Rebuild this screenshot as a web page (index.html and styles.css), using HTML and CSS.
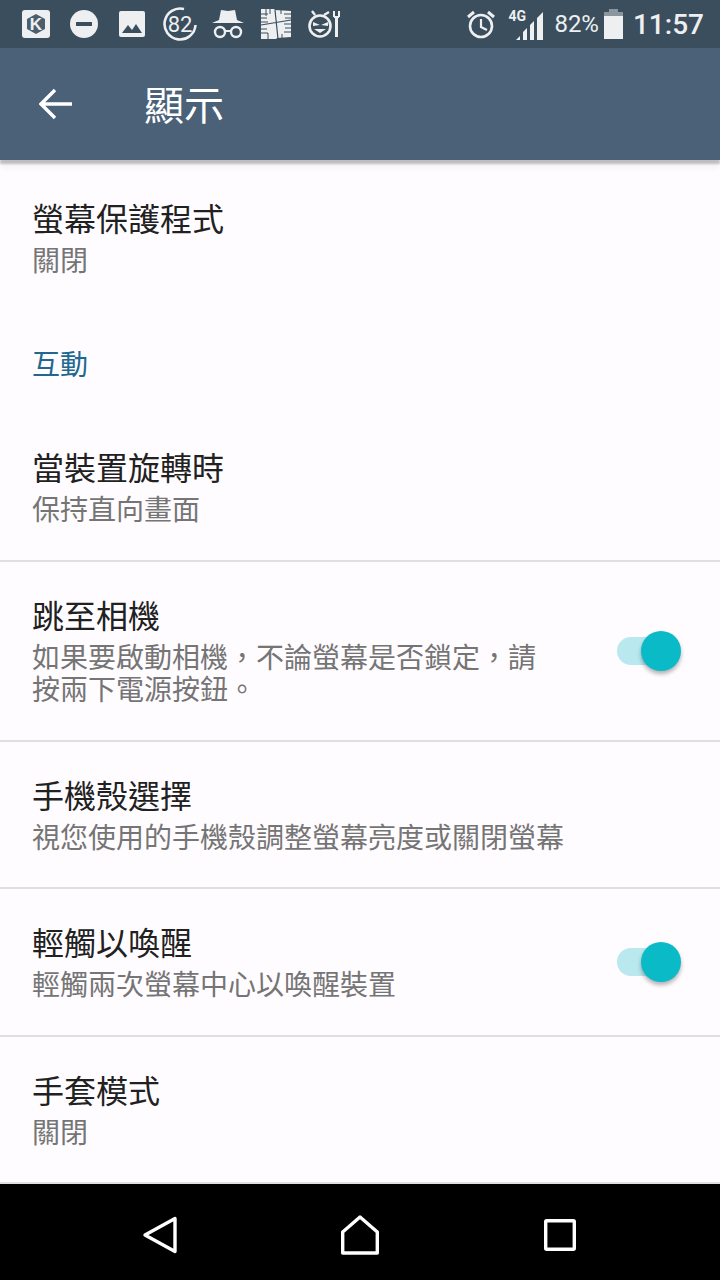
FILE: index.html
```html
<!DOCTYPE html>
<html lang="zh-Hant">
<head>
    <meta charset="UTF-8">
    <meta name="viewport" content="width=device-width, initial-scale=1.0">
    <title>顯示</title>
    <link rel="stylesheet" href="styles.css">
</head>
<body>
    <div class="screen">
        <!-- Status bar -->
        <div class="status">
            <div class="status-left">
                <svg class="ic" width="28" height="28" viewBox="0 0 28 28"><rect width="28" height="28" rx="3" fill="#eeeff0"/><path d="M14 4l9 5v10l-9 5-9-5V9z" fill="#4a5e6e"/><text x="14" y="20" text-anchor="middle" class="ic-k">K</text></svg>
                <svg class="ic" width="28" height="28" viewBox="0 0 28 28"><circle cx="14" cy="14" r="14" fill="#eeeff0"/><rect x="6" y="12" width="16" height="4" fill="#3b4e5d"/></svg>
                <svg class="ic" width="26" height="26" viewBox="0 0 26 26"><rect width="26" height="26" rx="2" fill="#eeeff0"/><path d="M3 22l6-8 4 5 4-6 6 9z" fill="#3b4e5d"/></svg>
                <svg class="ic" width="34" height="34" viewBox="0 0 34 34"><path d="M21 2A15.500 15.500 0 1 0 32.500 18" fill="none" stroke="#eeeff0" stroke-width="2.600"/><text x="17" y="24.500" text-anchor="middle" class="ic-num">82</text></svg>
                <svg class="ic" width="32" height="32" viewBox="0 0 32 32"><path d="M9 2l7 1 7-1 2 10 7 3H0l7-3z" fill="#eeeff0"/><circle cx="8" cy="24" r="5" fill="none" stroke="#eeeff0" stroke-width="2.400"/><circle cx="24" cy="24" r="5" fill="none" stroke="#eeeff0" stroke-width="2.400"/><path d="M13 23h6" stroke="#eeeff0" stroke-width="2"/></svg>
                <svg class="ic" width="32" height="32" viewBox="0 0 32 32"><path d="M1 1h13l1 1 16 1v26l-14 1-1 1H1z" fill="#eeeff0"/><path d="M15 2l3 29M1 17l30-5" stroke="#3b4e5d" stroke-width="1.200"/><path d="M0 6h8M0 10h7M0 14h8M0 21h7M0 25h8M24 6h8M25 10h7M24 16h8M25 20h7M24 24h8M6 0v8M10 0v6M21 0v6M8 31v-6M22 32v-6" stroke="#3b4e5d" stroke-width="1"/></svg>
                <svg class="ic" width="32" height="30" viewBox="0 0 32 30"><circle cx="12" cy="17" r="10.500" fill="none" stroke="#eeeff0" stroke-width="2.600"/><path d="M5 13l7 3-7 1zM20 13l-7 3 7 1z" fill="#eeeff0"/><path d="M6 20h12l-6 4z" fill="#eeeff0"/><path d="M7 6L4 2M16 6l5-3" stroke="#eeeff0" stroke-width="2.400"/><path d="M26 2v6M31 2v6M26 8h5" stroke="#eeeff0" stroke-width="2"/><path d="M28.500 8v20" stroke="#eeeff0" stroke-width="3"/></svg>
            </div>
            <div class="status-right">
                <svg class="ic" width="28" height="30" viewBox="0 0 28 30"><circle cx="14" cy="17" r="11" fill="none" stroke="#eeeff0" stroke-width="2.600"/><path d="M14 10v8l6 3" fill="none" stroke="#eeeff0" stroke-width="2.200"/><path d="M1 8l6-5M27 8l-6-5" stroke="#eeeff0" stroke-width="3"/></svg>
                <div class="signal">
                    <span class="net">4G</span>
                    <svg width="28" height="28" viewBox="0 0 28 28"><path d="M0 28l4-4v4zM7 28v-8l4-4v12zM14 28V13l4-4v19zM21 28V6l6-6v28z" fill="#eeeff0"/></svg>
                </div>
                <span class="batt-text">82%</span>
                <svg class="ic" width="19" height="30" viewBox="0 0 19 30"><path d="M5 0h9v3h5v27H0V3h5z" fill="#eeeff0" fill-opacity=".45"/><rect y="7" width="19" height="23" fill="#eeeff0"/></svg>
                <span class="clock">11:57</span>
            </div>
        </div>

        <!-- Toolbar -->
        <div class="toolbar">
            <svg class="back" width="34" height="32" viewBox="0 0 34 32"><path d="M33 16H3M16 2L2 16l14 14" fill="none" stroke="#fff" stroke-width="3.400"/></svg>
            <h1>顯示</h1>
        </div>

        <!-- Settings list -->
        <div class="list">
            <div class="row first">
                <div class="row-title">螢幕保護程式</div>
                <div class="row-sub">關閉</div>
            </div>
            <div class="group">互動</div>
            <div class="row line">
                <div class="row-title">當裝置旋轉時</div>
                <div class="row-sub">保持直向畫面</div>
            </div>
            <div class="row line has-switch">
                <div class="row-text">
                    <div class="row-title">跳至相機</div>
                    <div class="row-sub">如果要啟動相機，不論螢幕是否鎖定，請按兩下電源按鈕。</div>
                </div>
                <div class="switch"><span class="knob"></span></div>
            </div>
            <div class="row line short">
                <div class="row-title">手機殼選擇</div>
                <div class="row-sub">視您使用的手機殼調整螢幕亮度或關閉螢幕</div>
            </div>
            <div class="row line has-switch">
                <div class="row-text">
                    <div class="row-title">輕觸以喚醒</div>
                    <div class="row-sub">輕觸兩次螢幕中心以喚醒裝置</div>
                </div>
                <div class="switch"><span class="knob"></span></div>
            </div>
            <div class="row line short">
                <div class="row-title">手套模式</div>
                <div class="row-sub">關閉</div>
            </div>
        </div>

        <!-- Navigation bar -->
        <div class="nav">
            <svg width="36" height="38" viewBox="0 0 36 38"><path d="M33 2.500V35.500L3 19z" fill="none" stroke="#fff" stroke-width="3.400" stroke-linejoin="round"/></svg>
            <svg width="38" height="40" viewBox="0 0 38 40"><path d="M19 2L36.300 17V38H1.700V17z" fill="none" stroke="#fff" stroke-width="3.400" stroke-linejoin="round"/></svg>
            <svg width="32" height="32" viewBox="0 0 32 32"><rect x="1.700" y="1.700" width="28.600" height="28.600" rx="1" fill="none" stroke="#fff" stroke-width="3.400"/></svg>
        </div>
    </div>
</body>
</html>
```

FILE: styles.css
```css
* {
    box-sizing: border-box;
}
body {
    margin: 0;
    font-family: "Noto Sans CJK TC", "Noto Sans", Roboto, sans-serif;
    background-color: #fffcff;
}
.screen {
    width: 720px;
    height: 1280px;
    display: flex;
    flex-direction: column;
    overflow: hidden;
}
.status {
    height: 48px;
    flex: none;
    background-color: #3b4e5d;
    color: #eeeff0;
    display: flex;
    align-items: center;
    justify-content: space-between;
    padding: 0 16px 0 22px;
}
.status-left {
    display: flex;
    align-items: center;
    gap: 20px;
}
.status-left .ic:nth-child(3) {
    margin-left: 1px;
}
.status-left .ic:nth-child(4) {
    margin-left: -2px;
}
.status-left .ic:nth-child(5) {
    margin-left: -5px;
}
.status-left .ic:nth-child(6),
.status-left .ic:nth-child(7) {
    margin-left: -4px;
}
.status-right {
    display: flex;
    align-items: center;
}
.ic {
    display: block;
}
.ic-k {
    font-family: "Liberation Sans", sans-serif;
    font-size: 17px;
    font-weight: bold;
    fill: #eeeff0;
}
.ic-num {
    font-family: Roboto, sans-serif;
    font-size: 22px;
    fill: #eeeff0;
}
.signal {
    position: relative;
    width: 36px;
    height: 32px;
    margin-left: 13px;
    display: flex;
    align-items: flex-end;
    justify-content: flex-end;
}
.net {
    position: absolute;
    left: 0;
    top: 0;
    font-family: Roboto, sans-serif;
    font-size: 14px;
    line-height: 16px;
    font-weight: 700;
}
.batt-text {
    font-family: Roboto, sans-serif;
    font-size: 24px;
    margin-left: 10px;
    margin-right: 5px;
}
.clock {
    font-family: Roboto, sans-serif;
    font-size: 28px;
    font-weight: 500;
    margin-left: 10px;
}
.toolbar {
    height: 112px;
    flex: none;
    background-color: #4a6178;
    display: flex;
    align-items: center;
    padding-left: 39px;
    color: #fff;
    position: relative;
    box-shadow: 0 4px 2px rgba(0, 0, 0, 0.22), 0 8px 6px rgba(0, 0, 0, 0.04);
}
.back {
    margin-right: 71px;
}
.toolbar h1 {
    margin: 0 0 3px;
    font-size: 40px;
    font-weight: 400;
    line-height: 48px;
}
.list {
    flex: 1;
}
.row {
    padding: 32px 32px 36px;
}
.row.first {
    padding-top: 37px;
    padding-bottom: 37px;
}
.row.line {
    border-bottom: 2px solid #e0e0e0;
}
.row.short {
    padding-bottom: 35px;
}
.row-title {
    font-size: 32px;
    line-height: 40px;
    color: #212121;
}
.row-sub {
    font-size: 28px;
    line-height: 32px;
    margin-top: 6px;
    color: #757575;
}
.group {
    height: 102px;
    padding: 35px 32px 0;
    font-size: 28px;
    line-height: 32px;
    color: #21688f;
}
.has-switch {
    display: flex;
    align-items: center;
    justify-content: space-between;
    padding-right: 43px;
}
.row-text {
    width: 520px;
}
.switch {
    width: 60px;
    height: 28px;
    border-radius: 14px;
    background-color: #b9e9ee;
    margin-top: 4px;
    position: relative;
    flex: none;
}
.knob {
    position: absolute;
    right: -4px;
    top: -6px;
    width: 40px;
    height: 40px;
    border-radius: 50%;
    background-color: #0bbac7;
    box-shadow: 0 3px 4px rgba(0, 0, 0, 0.3);
}
.nav {
    height: 96px;
    flex: none;
    background-color: #000;
    display: grid;
    grid-template-columns: repeat(3, 200px);
    justify-content: center;
    justify-items: center;
    align-items: center;
    padding-top: 5px;
}
```
